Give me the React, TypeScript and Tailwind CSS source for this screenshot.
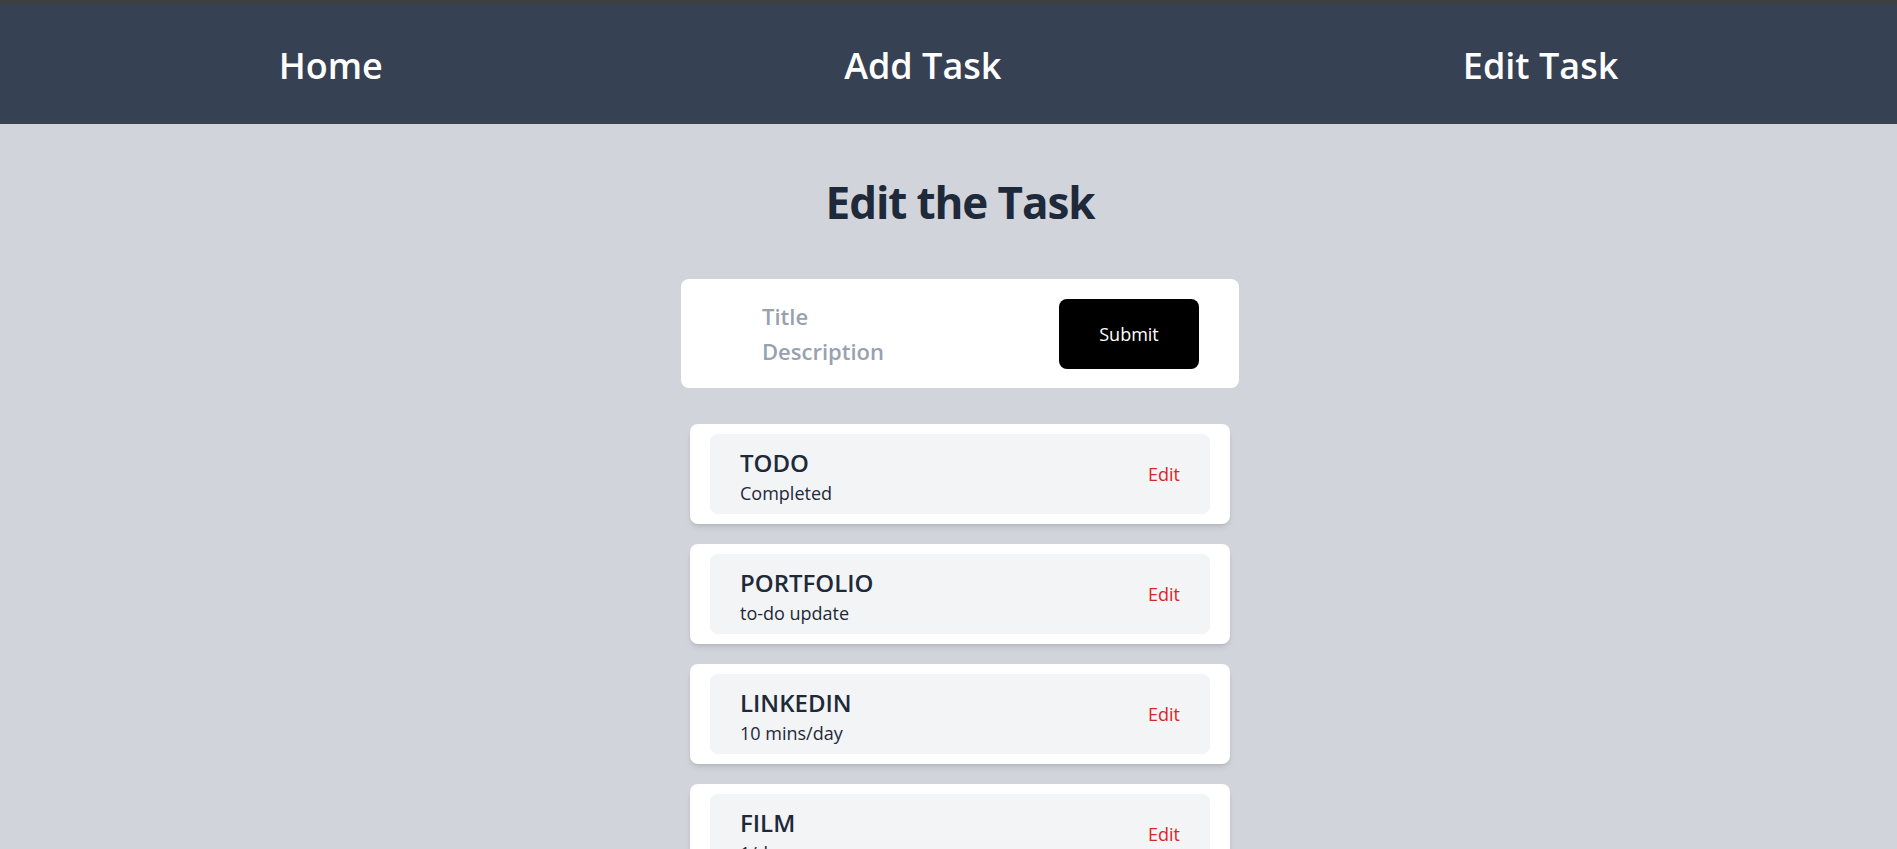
import React, { useState } from "react";

type Task = {
  id: number;
  title: string;
  description: string;
};

const tasks: Task[] = [
  { id: 1, title: "TODO", description: "Completed" },
  { id: 2, title: "PORTFOLIO", description: "to-do update" },
  { id: 3, title: "LINKEDIN", description: "10 mins/day" },
  { id: 4, title: "FILM", description: "1/day" },
  { id: 5, title: "GYM", description: "5 days/week" },
];

const Navbar = () => {
  return (
    <div>
      <div className="h-1 bg-[#3f3f3f]" />
      <nav className="flex justify-around bg-gray-700 px-12 pt-[42px] pb-[38px]">
        <a href="#" className="text-4xl leading-10 font-semibold text-white">
          Home
        </a>
        <a href="#" className="text-4xl leading-10 font-semibold text-white">
          Add Task
        </a>
        <a href="#" className="text-4xl leading-10 font-semibold text-white">
          Edit Task
        </a>
      </nav>
    </div>
  );
};

const TaskCard = ({ task }: { task: Task }) => {
  return (
    <li className="w-[540px] rounded-lg bg-white px-5 py-[10px] shadow-md">
      <div className="flex h-[80px] items-center justify-between rounded-lg bg-gray-100 px-[30px]">
        <div className="pt-[5px]">
          <h2 className="text-2xl leading-8 font-semibold text-gray-800">{task.title}</h2>
          <p className="text-lg leading-7 text-gray-800">{task.description}</p>
        </div>
        <button className="text-lg text-[#dc2626]">Edit</button>
      </div>
    </li>
  );
};

export default function App() {
  const [title, setTitle] = useState("");
  const [description, setDescription] = useState("");

  return (
    <div className="min-h-screen bg-[#d1d5db] font-['Open_Sans','Noto_Sans',sans-serif]">
      <Navbar />
      <main className="flex flex-col items-center pl-[23px] pb-10">
        <h1 className="mt-[56px] text-[44px] leading-none font-bold tracking-tight text-gray-800">
          Edit the Task
        </h1>

        <form
          className="mt-[55px] flex h-[109px] w-[558px] items-center justify-between rounded-lg bg-white pr-10 pl-[81px]"
          onSubmit={(e) => e.preventDefault()}
        >
          <div className="flex flex-col">
            <input
              value={title}
              onChange={(e) => setTitle(e.target.value)}
              placeholder="Title"
              className="h-[35px] w-60 bg-transparent text-[22px] font-semibold text-gray-800 outline-none placeholder:text-gray-400"
            />
            <input
              value={description}
              onChange={(e) => setDescription(e.target.value)}
              placeholder="Description"
              className="h-[35px] w-60 bg-transparent text-[22px] font-semibold text-gray-800 outline-none placeholder:text-gray-400"
            />
          </div>
          <button type="submit" className="h-[70px] w-[140px] rounded-lg bg-black text-lg text-white">
            Submit
          </button>
        </form>

        <ul className="mt-9 flex flex-col gap-5">
          {tasks.map((task) => (
            <TaskCard key={task.id} task={task} />
          ))}
        </ul>
      </main>
    </div>
  );
}
